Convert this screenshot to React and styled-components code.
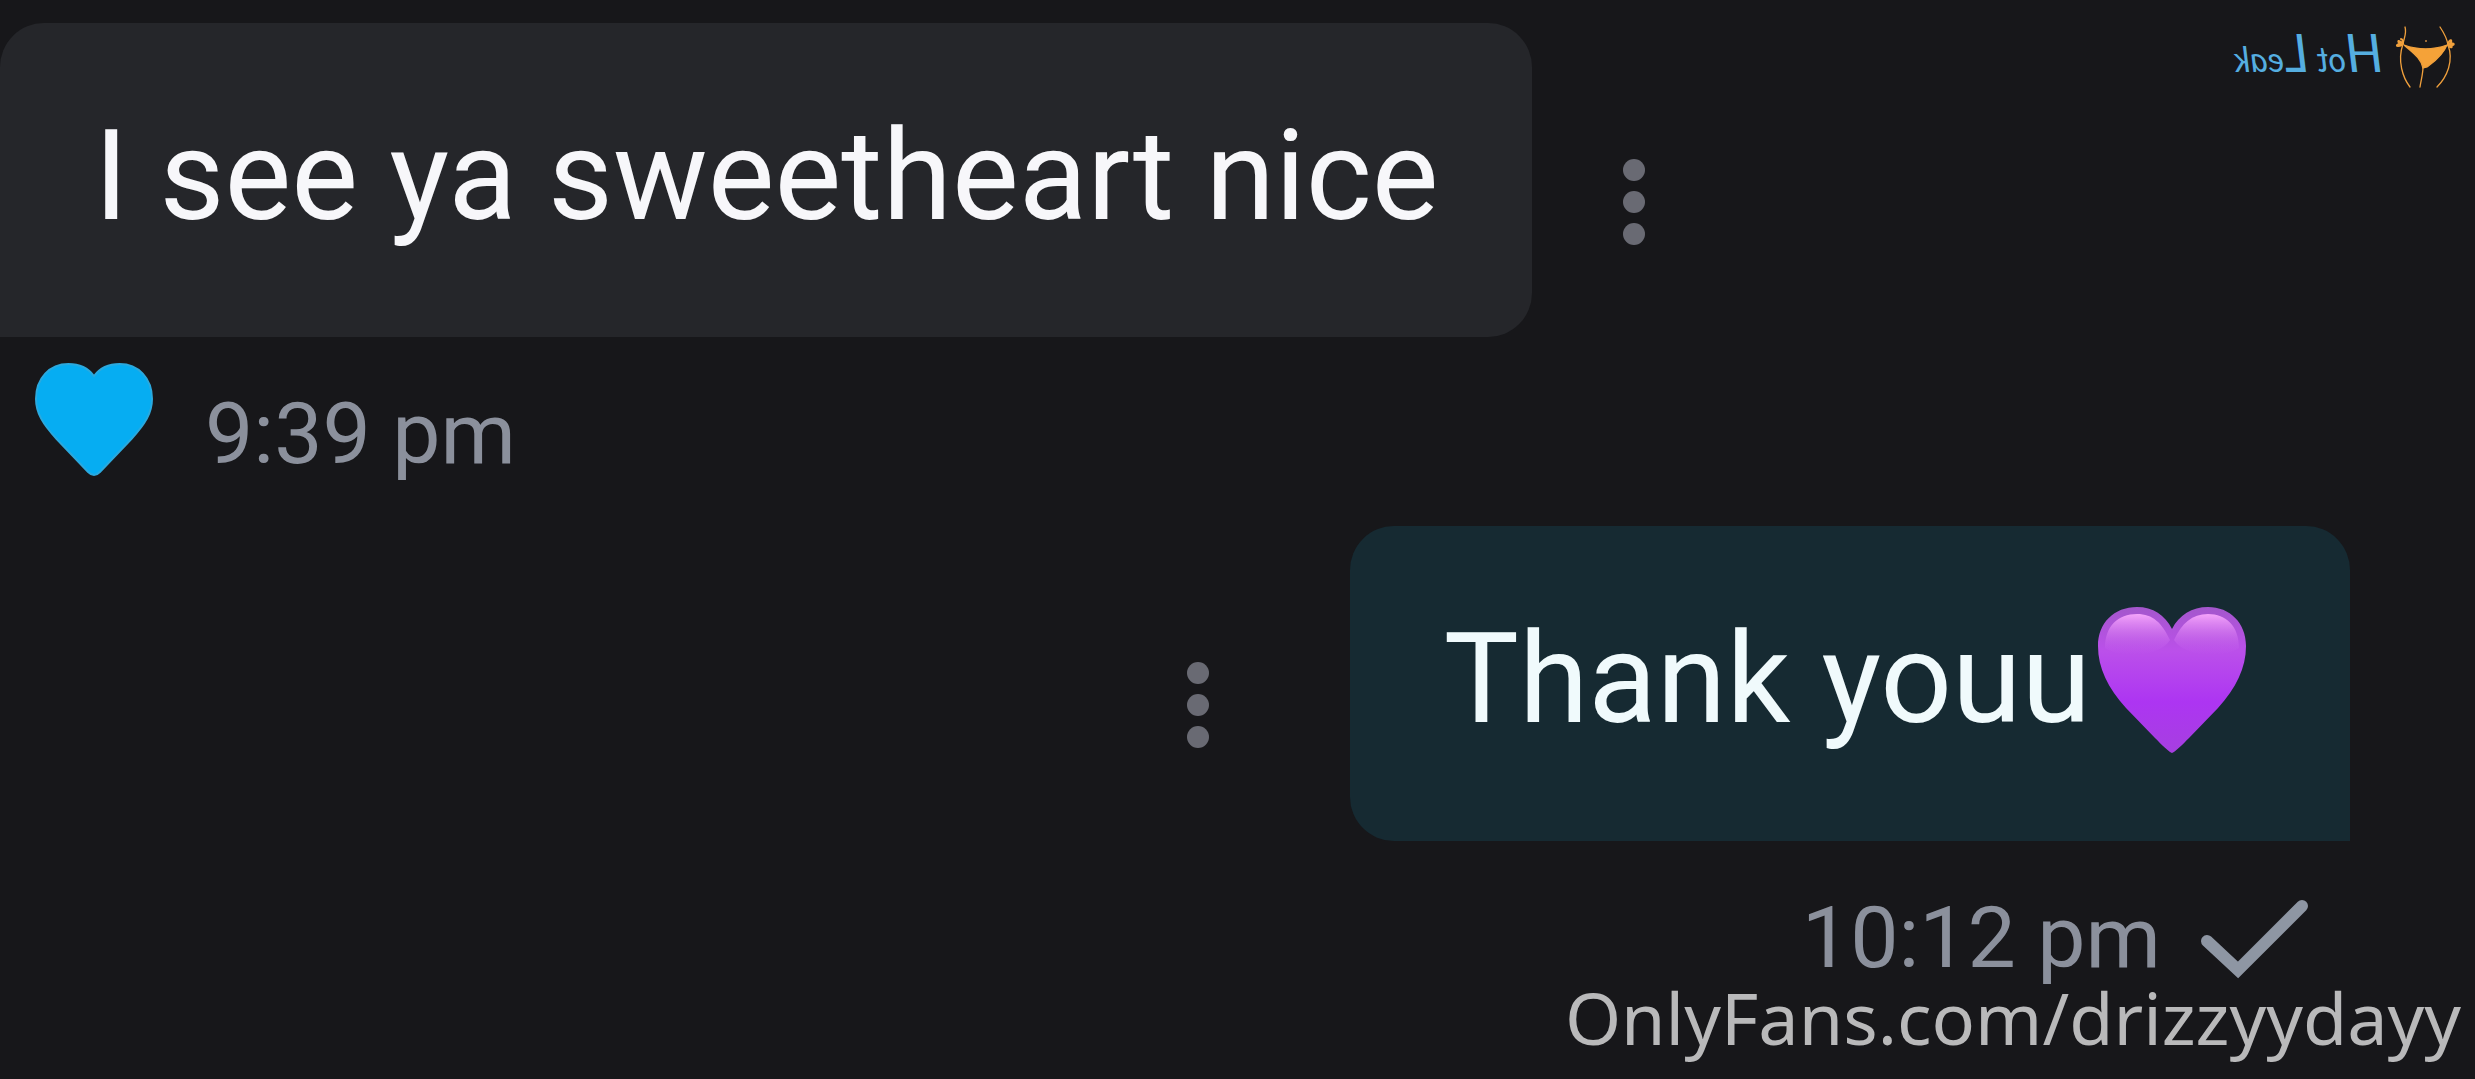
import React from "react";
import styled, { createGlobalStyle } from "styled-components";

const GlobalStyle = createGlobalStyle`
  *, *::before, *::after { box-sizing: border-box; }
  body {
    margin: 0;
    background: #17171a;
    color: #f7f7fa;
    font-family: Roboto, "Liberation Sans", sans-serif;
  }
`;

const Page = styled.main`
  position: relative;
  min-height: 100vh;
  padding-top: 23px;
  overflow: hidden;
`;

const Thread = styled.div`
  display: flex;
  flex-direction: column;
  gap: 41px;
`;

const Message = styled.article`
  display: flex;
  flex-direction: column;
  align-items: ${(p) => (p.$sent ? "flex-end" : "flex-start")};
  padding-right: ${(p) => (p.$sent ? "125px" : "0")};
`;

const BubbleRow = styled.div`
  display: flex;
  flex-direction: ${(p) => (p.$sent ? "row-reverse" : "row")};
  align-items: flex-start;
  gap: ${(p) => (p.$sent ? "120px" : "70px")};
`;

const Bubble = styled.p`
  display: flex;
  gap: 3px;
  margin: 0;
  padding: 80px 94px 87px;
  font-size: 126px;
  line-height: 147px;
  white-space: nowrap;
  color: ${(p) => (p.$sent ? "#f0fafc" : "#f7f7fa")};
  background: ${(p) => (p.$sent ? "#162a32" : "#25262a")};
  border-radius: ${(p) => (p.$sent ? "44px 44px 0 44px" : "44px 44px 44px 0")};
`;

const MenuButton = styled.button`
  display: flex;
  flex-direction: column;
  align-items: center;
  gap: 10px;
  width: 64px;
  margin: 0;
  padding: 136px 0 0;
  border: 0;
  background: none;
  cursor: pointer;
`;

const Dot = styled.span`
  width: 22px;
  height: 22px;
  border-radius: 50%;
  background: #696a73;
`;

const Meta = styled.footer`
  display: flex;
  align-items: flex-start;
  gap: ${(p) => (p.$sent ? "40px" : "52px")};
  padding: ${(p) => (p.$sent ? "25px 41px 0 0" : "25px 0 0 35px")};
`;

const Time = styled.time`
  margin-top: 20px;
  font-size: 86px;
  line-height: 103px;
  color: #8b909c;
`;

const BlueHeart = styled.svg`
  width: 118px;
  height: 114px;
`;

const PurpleHeart = styled.svg`
  width: 162px;
  height: 148px;
`;

const Check = styled.svg`
  width: 108px;
  height: 80px;
  margin-top: 33px;
`;

const Brand = styled.div`
  position: absolute;
  top: 20px;
  right: 20px;
  display: flex;
  align-items: center;
  gap: 12px;
`;

const BrandName = styled.span`
  transform: scaleX(-1);
  font-family: Lato, "Liberation Sans", sans-serif;
  font-style: italic;
  font-size: 34px;
  line-height: 64px;
  color: #55aee0;
`;

const Initial = styled.span`
  font-size: 52px;
`;

const BrandMark = styled.svg`
  width: 60px;
  height: 66px;
`;

const Handle = styled.span`
  position: absolute;
  right: 14px;
  bottom: 26px;
  font-family: "Noto Sans", "Open Sans", sans-serif;
  font-size: 72px;
  line-height: 72px;
  color: #b9b9ba;
`;

function Menu() {
  return (
    <MenuButton type="button" aria-label="Message options">
      <Dot />
      <Dot />
      <Dot />
    </MenuButton>
  );
}

export default function App() {
  return (
    <>
      <GlobalStyle />
      <Page>
        <Thread>
          <Message>
            <BubbleRow>
              <Bubble>I see ya sweetheart nice</Bubble>
              <Menu />
            </BubbleRow>
            <Meta>
              <BlueHeart viewBox="0 0 120 114" preserveAspectRatio="none" aria-hidden="true">
                <path
                  d="M60 113 C58 113 56 112 54 110 L22 77 C8 62 1 51 1 37 C1 16 15 2 34 2 C45 2 54 6 60 14 C66 6 75 2 86 2 C105 2 119 16 119 37 C119 51 112 62 98 77 L66 110 C64 112 62 113 60 113 Z"
                  fill="#06adf2"
                  stroke="#2ba9de"
                  strokeWidth="2"
                />
              </BlueHeart>
              <Time>9:39 pm</Time>
            </Meta>
          </Message>

          <Message $sent>
            <BubbleRow $sent>
              <Bubble $sent>
                Thank youu
                <PurpleHeart viewBox="0 0 162 148" aria-hidden="true">
                  <defs>
                    <linearGradient id="heartFill" x1="0" y1="0" x2="0" y2="1">
                      <stop offset="0" stopColor="#a457cc" />
                      <stop offset="0.3" stopColor="#bb50ea" />
                      <stop offset="0.65" stopColor="#ad35f2" />
                      <stop offset="1" stopColor="#a63fe0" />
                    </linearGradient>
                    <linearGradient id="heartShine" x1="0" y1="0" x2="0" y2="1">
                      <stop offset="0" stopColor="#f5a4fb" />
                      <stop offset="1" stopColor="#c45cf0" stopOpacity="0" />
                    </linearGradient>
                  </defs>
                  <path
                    d="M78 147 C76 147 67 138 61 132 L32 102 C14 82 4 62 4 40 C4 17 20 1 43 1 C59 1 71 9 78 23 C85 9 98 1 114 1 C136 1 152 17 152 40 C152 62 142 82 124 102 L95 132 C89 138 80 147 78 147 Z"
                    fill="url(#heartFill)"
                  />
                  <path
                    d="M11 42 C11 20 24 8 43 8 C59 8 68 17 76 34 C66 50 30 54 11 42 Z M80 34 C88 17 98 8 114 8 C132 8 145 20 145 42 C126 54 90 50 80 34 Z"
                    fill="url(#heartShine)"
                  />
                </PurpleHeart>
              </Bubble>
              <Menu />
            </BubbleRow>
            <Meta $sent>
              <Time>10:12 pm</Time>
              <Check viewBox="0 0 108 80" role="img" aria-label="Sent">
                <path
                  d="M6 42 L37 71 L101 7"
                  fill="none"
                  stroke="#8e96a3"
                  strokeWidth="12"
                  strokeLinecap="round"
                />
              </Check>
            </Meta>
          </Message>
        </Thread>

        <Brand>
          <BrandName>
            <Initial>H</Initial>ot <Initial>L</Initial>eak
          </BrandName>
          <BrandMark viewBox="0 0 60 66" fill="none" stroke="#f0a03c" strokeWidth="1.3" strokeLinecap="round" aria-hidden="true">
            <path d="M9 22 C23 27 38 27 52 22 C47 34 37 40 32 44 L28 45 C26 35 18 30 9 22 Z" fill="#f5a238" />
            <path d="M10 4 C12 10 9 15 8 21 C2 38 8 55 15 64 M45 4 C49 10 52 15 53 22 C59 38 52 54 42 64 M28 44 C28 51 26 57 25 64" />
            <path d="M8 21 C3 16 2 18 5 21 C1 21 0 25 7 22 M6 16 C8 16 8 19 8 21 M53 21 C55 15 58 17 55 21 C60 19 60 23 55 22 C59 25 55 25 53 22" strokeWidth="2" />
            <circle cx="31" cy="18" r="1" fill="#c9853c" stroke="none" />
          </BrandMark>
        </Brand>
        <Handle>OnlyFans.com/drizzyydayy</Handle>
      </Page>
    </>
  );
}
